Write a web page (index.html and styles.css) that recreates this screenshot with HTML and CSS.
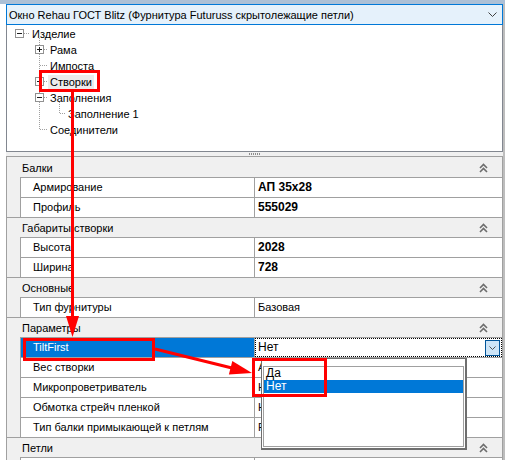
FILE: index.html
```html
<!DOCTYPE html>
<html>
<head>
<meta charset="utf-8">
<link rel="stylesheet" href="styles.css">
</head>
<body>
<div class="app">
  <div class="topstrip"></div>
  <div class="main">
    <div class="combo">
      <span class="combo-text">Окно Rehau ГОСТ Blitz (Фурнитура Futuruss скрытолежащие петли)</span>
      <svg class="combo-arrow" width="9" height="5" viewBox="0 0 9 5"><polyline points="0.5,0.5 4.5,4.5 8.5,0.5" fill="none" stroke="#404040" stroke-width="1"/></svg>
    </div>
    <div class="tree">
      <svg class="tree-lines" width="495" height="126" viewBox="0 0 495 126">
        <g transform="translate(-7,-25)">
          <g stroke="#a0a0a0" stroke-width="1" stroke-dasharray="1 1" fill="none">
            <line x1="24" y1="33.5" x2="30" y2="33.5"/>
            <line x1="39.5" y1="38" x2="39.5" y2="130"/>
            <line x1="44" y1="49.5" x2="48" y2="49.5"/>
            <line x1="40" y1="65.5" x2="48" y2="65.5"/>
            <line x1="44" y1="81.5" x2="48" y2="81.5"/>
            <line x1="44" y1="97.5" x2="48" y2="97.5"/>
            <line x1="59.5" y1="102" x2="59.5" y2="113.5"/>
            <line x1="60" y1="113.5" x2="66" y2="113.5"/>
            <line x1="40" y1="129.5" x2="48" y2="129.5"/>
          </g>
          <g stroke="#919191" stroke-width="1" fill="#fff">
            <rect x="15.5" y="29.5" width="8" height="8"/>
            <rect x="35.5" y="45.5" width="8" height="8"/>
            <rect x="35.5" y="77.5" width="8" height="8"/>
            <rect x="35.5" y="93.5" width="8" height="8"/>
          </g>
          <g stroke="#1e1e1e" stroke-width="1">
            <line x1="17" y1="33.5" x2="22" y2="33.5"/>
            <line x1="37" y1="49.5" x2="42" y2="49.5"/>
            <line x1="39.5" y1="47" x2="39.5" y2="52"/>
            <line x1="37" y1="81.5" x2="42" y2="81.5"/>
            <line x1="39.5" y1="79" x2="39.5" y2="84"/>
            <line x1="37" y1="97.5" x2="42" y2="97.5"/>
          </g>
        </g>
      </svg>
      <div class="node l0">Изделие</div>
      <div class="node l1">Рама</div>
      <div class="node l1">Импоста</div>
      <div class="node l1"><span class="selnode">Створки</span></div>
      <div class="node l1">Заполнения</div>
      <div class="node l2">Заполнение 1</div>
      <div class="node l1">Соединители</div>
    </div>
    <div class="splitter"><span class="grip"></span></div>
    <div class="grid">
      <div class="cat first"><span>Балки</span><svg class="up" width="9" height="10" viewBox="0 0 9 10"><path d="M1 5 L4.5 1.5 L8 5 M1 9 L4.5 5.5 L8 9" fill="none" stroke="#6d6d6d" stroke-width="1.6"/></svg></div>
      <div class="row"><div class="margin"></div><div class="cells"><div class="label">Армирование</div><div class="value b">АП 35x28</div></div></div>
      <div class="row"><div class="margin"></div><div class="cells"><div class="label">Профиль</div><div class="value b">555029</div></div></div>

      <div class="cat"><span>Габариты створки</span><svg class="up" width="9" height="10" viewBox="0 0 9 10"><path d="M1 5 L4.5 1.5 L8 5 M1 9 L4.5 5.5 L8 9" fill="none" stroke="#6d6d6d" stroke-width="1.6"/></svg></div>
      <div class="row"><div class="margin"></div><div class="cells"><div class="label">Высота</div><div class="value b">2028</div></div></div>
      <div class="row"><div class="margin"></div><div class="cells"><div class="label">Ширина</div><div class="value b">728</div></div></div>

      <div class="cat"><span>Основные</span><svg class="up" width="9" height="10" viewBox="0 0 9 10"><path d="M1 5 L4.5 1.5 L8 5 M1 9 L4.5 5.5 L8 9" fill="none" stroke="#6d6d6d" stroke-width="1.6"/></svg></div>
      <div class="row"><div class="margin"></div><div class="cells"><div class="label">Тип фурнитуры</div><div class="value">Базовая</div></div></div>

      <div class="cat"><span>Параметры</span><svg class="up" width="9" height="10" viewBox="0 0 9 10"><path d="M1 5 L4.5 1.5 L8 5 M1 9 L4.5 5.5 L8 9" fill="none" stroke="#6d6d6d" stroke-width="1.6"/></svg></div>
      <div class="row"><div class="margin"></div><div class="cells"><div class="label sel">TiltFirst</div><div class="value edit"><span class="edit-text">Нет</span><span class="dd-btn"><svg width="7" height="4" viewBox="0 0 7 4"><polyline points="0.5,0.5 3.5,3.5 6.5,0.5" fill="none" stroke="#505050" stroke-width="1"/></svg></span></div></div></div>
      <div class="row"><div class="margin"></div><div class="cells"><div class="label">Вес створки</div><div class="value">Авто</div></div></div>
      <div class="row"><div class="margin"></div><div class="cells"><div class="label">Микропроветриватель</div><div class="value">Нет</div></div></div>
      <div class="row"><div class="margin"></div><div class="cells"><div class="label">Обмотка стрейч пленкой</div><div class="value">Нет</div></div></div>
      <div class="row"><div class="margin"></div><div class="cells"><div class="label">Тип балки примыкающей к петлям</div><div class="value">Рама</div></div></div>

      <div class="cat"><span>Петли</span><svg class="up" width="9" height="10" viewBox="0 0 9 10"><path d="M1 5 L4.5 1.5 L8 5 M1 9 L4.5 5.5 L8 9" fill="none" stroke="#6d6d6d" stroke-width="1.6"/></svg></div>
      <div class="row"><div class="margin"></div><div class="cells"><div class="label"></div><div class="value"></div></div></div>
    </div>
  </div>

  <div class="dropdown">
    <div class="list">
      <div class="item">Да</div>
      <div class="item hi">Нет</div>
    </div>
  </div>

  <svg class="annot" width="505" height="460" viewBox="0 0 505 460">
    <g fill="none" stroke="#ff0000" stroke-width="3">
      <rect x="40.5" y="71.5" width="58" height="19"/>
      <line x1="72.5" y1="92" x2="72.5" y2="318"/>
      <rect x="24.5" y="339.5" width="129" height="20"/>
      <line x1="155" y1="349" x2="232" y2="368"/>
      <rect x="253.5" y="359.5" width="72" height="36"/>
    </g>
    <g fill="#ff0000">
      <polygon points="66,316 79,316 72.5,337"/>
      <polygon points="252,373 232.3,360.9 228.9,374.5"/>
    </g>
  </svg>
</div>
</body>
</html>
```

FILE: styles.css
```css
* { box-sizing: border-box; }

body {
  margin: 0;
  font-family: "Liberation Sans", Arial, sans-serif;
  font-size: 11px;
  color: #000;
}

.app {
  position: relative;
  width: 505px;
  height: 460px;
  overflow: hidden;
  background: linear-gradient(to right, #ffffff 503px, #bdbdbd 503px);
}

.topstrip {
  height: 4px;
  background: #acc0d6;
}

.main {
  margin-left: 6px;
  width: 497px;
}

/* combo box */
.combo {
  height: 21px;
  border: 1px solid #0078d7;
  background: #e5f1fb;
  display: flex;
  align-items: center;
  padding: 0 5px 0 2px;
}
.combo-text {
  flex: 1;
  white-space: nowrap;
}
.combo-arrow {
  flex: none;
}

/* tree */
.tree {
  position: relative;
  height: 127px;
  border: 1px solid #828790;
  border-top: none;
  background: #fff;
  padding-top: 1px;
}
.tree-lines {
  position: absolute;
  left: 0;
  top: 0;
}
.node {
  height: 16px;
  line-height: 16px;
  white-space: nowrap;
}
.l0 { padding-left: 25px; }
.l1 { padding-left: 43px; }
.l2 { padding-left: 61px; }
.selnode {
  background: #ececec;
  padding: 1px 2px;
  margin-left: -2px;
}

/* splitter */
.splitter {
  height: 4px;
  background: #f0f0f0;
  display: flex;
  justify-content: center;
  align-items: center;
}
.grip {
  width: 12px;
  height: 2px;
  background: repeating-linear-gradient(90deg, #8c8c8c 0 1px, transparent 1px 2px);
}

/* property grid */
.grid {
  border: 1px solid #a0a0a0;
  border-bottom: none;
  background: #f0f0f0;
  padding-top: 1px;
}
.cat {
  height: 20px;
  display: flex;
  align-items: center;
  justify-content: space-between;
  padding: 0 14px 0 15px;
  border-top: 1px solid #a0a0a0;
}
.cat.first {
  height: 19px;
  border-top: none;
}
.row {
  display: flex;
  height: 20px;
}
.margin {
  width: 13px;
  flex: none;
}
.cells {
  flex: 1;
  display: flex;
  border-top: 1px solid #a0a0a0;
  border-left: 1px solid #a0a0a0;
  background: #fff;
}
.label {
  width: 234px;
  flex: none;
  border-right: 1px solid #a0a0a0;
  padding-left: 12px;
  line-height: 19px;
  white-space: nowrap;
}
.label.sel {
  background: #0078d7;
  color: #fff;
}
.value {
  flex: 1;
  padding-left: 3px;
  line-height: 19px;
  white-space: nowrap;
}
.value.b {
  font-weight: bold;
  font-size: 12px;
}
.value.edit {
  display: flex;
  align-items: center;
  border: 1px dotted #000;
  padding-left: 2px;
  padding-right: 1px;
  font-size: 12px;
}
.edit-text {
  flex: 1;
}
.dd-btn {
  width: 15px;
  height: 16px;
  background: #cce4f7;
  border: 1px solid #005499;
  display: flex;
  align-items: center;
  justify-content: center;
}

/* dropdown list */
.dropdown {
  position: absolute;
  left: 261px;
  top: 358px;
  width: 206px;
  height: 92px;
  background: #fff;
  border: 1px solid #6e6e6e;
  border-right-width: 2px;
  border-bottom-width: 2px;
  padding: 7px 1px 1px 1px;
}
.list {
  height: 100%;
  border: 1px solid #a0a0a0;
  background: #fff;
}
.item {
  height: 13px;
  line-height: 13px;
  padding-left: 2px;
  font-size: 12px;
}
.item.hi {
  background: #0078d7;
  color: #fff;
}

/* annotations */
.annot {
  position: absolute;
  left: 0;
  top: 0;
  pointer-events: none;
}
```
